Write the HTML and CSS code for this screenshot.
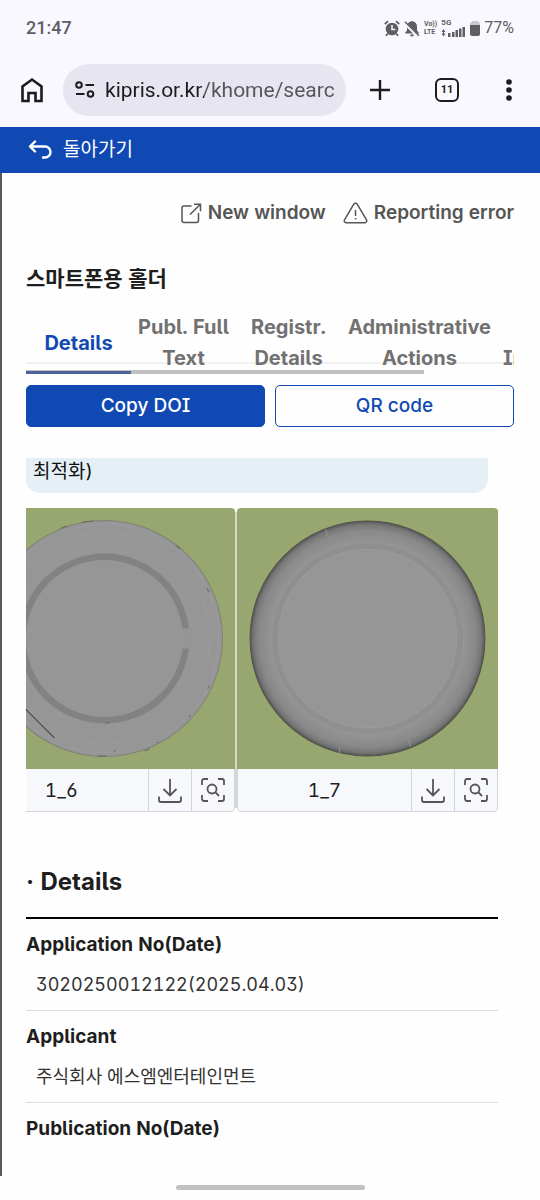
FILE: index.html
```html
<!DOCTYPE html>
<html lang="ko">
<head>
  <meta charset="UTF-8">
  <meta name="viewport" content="width=device-width, initial-scale=1.0">
  <title>스마트폰용 홀더</title>
  <link rel="stylesheet" href="styles.css">
</head>
<body>
  <header class="browser">
    <div class="status-bar">
      <span class="clock">21:47</span>
      <div class="status-icons">
        <svg width="16" height="17" viewBox="0 0 16 17">
          <circle cx="8" cy="9" r="6.3" fill="#5f5e63"/>
          <path d="M.8 4.2L4 1.2M15.2 4.2L12 1.2M3.8 13.6L2 15.8M12.2 13.6L14 15.8" stroke="#5f5e63" stroke-width="1.8"/>
          <path d="M8 5v4.4h3.4" fill="none" stroke="#f9f8fe" stroke-width="1.5"/>
        </svg>
        <svg width="16" height="17" viewBox="0 0 16 17">
          <path d="M8 1c-3.4.6-5 2.6-5 5.500v4L1.200 12.500v1h13.600v-1L13 10.500v-4C13 3.600 11.400 1.600 8 1z" fill="#5f5e63"/>
          <path d="M6 14.600h4a2 2 0 0 1-4 0z" fill="#5f5e63"/>
          <path d="M.2 2.600L14 16.400" stroke="#f9f8fe" stroke-width="3"/>
          <path d="M1 1.800L15 15.800" stroke="#5f5e63" stroke-width="1.500"/>
        </svg>
        <span class="volte"><span>Vo))</span><span>LTE</span></span>
        <span class="signal">
          <span>5G</span>
          <svg width="25" height="10" viewBox="0 0 25 10" fill="#5f5e63">
            <path d="M2.500 2L4.500 5h-4zM2.500 9.500L.5 6.500h4zM2 4h1v4H2z"/>
            <rect x="7" y="6" width="2.500" height="4"/><rect x="11" y="5" width="2.500" height="5"/>
            <rect x="14.500" y="3" width="2.500" height="7"/><rect x="18" y="1.500" width="2.500" height="8.500"/>
            <rect x="21.500" y="0" width="2.500" height="10"/>
          </svg>
        </span>
        <svg width="10" height="17" viewBox="0 0 10 17">
          <path d="M0 4a2 2 0 0 1 2-2V1h6v1a2 2 0 0 1 2 2v2H0z" fill="#c9c8ce"/>
          <path d="M0 5h10v9a2 2 0 0 1-2 2H2a2 2 0 0 1-2-2z" fill="#5f5e63"/>
        </svg>
        <span class="battery">77%</span>
      </div>
    </div>
    <div class="toolbar">
      <button type="button" class="icon-btn" aria-label="Home">
        <svg width="24" height="26" viewBox="0 0 24 26">
          <path d="M2.500 24V9.500L12 2.500l9.500 7V24h-6v-8h-7v8z" fill="none" stroke="#1c1b20" stroke-width="2.600"/>
        </svg>
      </button>
      <div class="address">
        <svg width="20" height="18" viewBox="0 0 20 18" fill="none" stroke="#1c1b20" stroke-width="2">
          <circle cx="4" cy="4" r="2.800"/><path d="M10.500 4H19M1 13h8.500"/><circle cx="15.500" cy="13" r="2.800"/>
        </svg>
        <input type="text" class="url" aria-label="Address" value="kipris.or.kr/khome/searc">
      </div>
      <div class="toolbar-actions">
        <button type="button" class="icon-btn" aria-label="New tab">
          <svg width="22" height="22" viewBox="0 0 22 22"><path d="M11 1v20M1 11h20" stroke="#1c1b20" stroke-width="2.400"/></svg>
        </button>
        <button type="button" class="tab-count">11</button>
        <button type="button" class="icon-btn menu-btn" aria-label="Menu">
          <svg width="6" height="22" viewBox="0 0 6 22" fill="#1c1b20"><circle cx="3" cy="3" r="2.800"/><circle cx="3" cy="11" r="2.800"/><circle cx="3" cy="19" r="2.800"/></svg>
        </button>
      </div>
    </div>
  </header>

  <a class="back-bar" href="#">
    <svg width="24" height="20" viewBox="0 0 24 20" fill="none" stroke="#fff" stroke-width="2.400" stroke-linecap="round" stroke-linejoin="round">
      <path d="M7 1.500L2 6.500 7 11.500M2.500 6.500h14.500a5 5 0 0 1 0 11H15"/>
    </svg>
    돌아가기
  </a>

  <main class="page">
    <div class="page-links">
      <a href="#">
        <svg width="21" height="21" viewBox="0 0 21 21" fill="none" stroke="#555" stroke-width="1.500">
          <path d="M10.500 3H3a2 2 0 0 0-2 2v12.500a2 2 0 0 0 2 2h12.500a2 2 0 0 0 2-2V10M13 1.200h6.500v7M19.200 1.500L9 11.500"/>
        </svg>
        New window
      </a>
      <a href="#">
        <svg width="25" height="22" viewBox="0 0 25 22" fill="none" stroke="#555" stroke-width="1.500" stroke-linejoin="round">
          <path d="M10.800 2.200a2 2 0 0 1 3.400 0l9.300 15.600a1.900 1.900 0 0 1-1.600 2.900H3.100a1.900 1.900 0 0 1-1.600-2.900z"/>
          <path d="M12.500 8v6M12.500 16v1.500"/>
        </svg>
        Reporting error
      </a>
    </div>

    <h1 class="title">스마트폰용 홀더</h1>

    <nav class="tabs">
      <a href="#" class="tab active">Details</a>
      <a href="#" class="tab">Publ. Full<br>Text</a>
      <a href="#" class="tab">Registr.<br>Details</a>
      <a href="#" class="tab">Administrative<br>Actions</a>
      <a href="#" class="tab more">In</a>
    </nav>
    <div class="tab-scroll"><div class="tab-marker"></div></div>

    <div class="buttons">
      <button type="button" class="btn primary">Copy DOI</button>
      <button type="button" class="btn">QR code</button>
    </div>

    <div class="content">
      <p class="notice">최적화)</p>

      <div class="gallery">
        <figure class="shot">
          <svg class="drawing" viewBox="0 0 260 260">
            <rect width="260" height="260" fill="#98a66f"/>
            <circle cx="130" cy="130" r="117.500" fill="#969696" stroke="#7f8377" stroke-width="1"/>
            <g fill="none" stroke="#9b9b9b">
              <circle cx="130" cy="130" r="114" stroke="#9b9b9f"/>
              <circle cx="130" cy="130" r="105"/>
              <circle cx="130" cy="130" r="88" stroke="#999"/>
            </g>
            <circle cx="130" cy="130" r="81.500" fill="none" stroke="#828282" stroke-width="6.500"/>
            <path d="M200 120h15v20h-15z" fill="#969696"/>
            <path d="M177 122h28M177 139h28M177 122v17M53 122h30v17H53" fill="none" stroke="#999"/>
            <path d="M51 200l29 29" stroke="#444" stroke-width="1"/>
            <path d="M108 14l11-1M87 20l6-2M201 37l4 4M232 80l2 4M170 242l5-2M123 247h9M233 180l1-3M214 208l2-2M131 214h4M182 234l2-1M139 242h2" stroke="#676a61" stroke-width="1"/>
          </svg>
          <figcaption>
            <span class="shot-name">1_6</span>
            <button type="button" aria-label="Download">
              <svg width="24" height="25" viewBox="0 0 24 25" fill="none" stroke="#555" stroke-width="1.800">
                <path d="M12 1v16M5.500 11l6.500 6.500 6.500-6.500M1 18.500V22a2 2 0 0 0 2 2h18a2 2 0 0 0 2-2v-3.500"/>
              </svg>
            </button>
            <button type="button" aria-label="Zoom">
              <svg width="24" height="24" viewBox="0 0 24 24" fill="none" stroke="#555" stroke-width="1.800">
                <path d="M1 7V3a2 2 0 0 1 2-2h4M17 1h4a2 2 0 0 1 2 2v4M23 17v4a2 2 0 0 1-2 2h-4M7 23H3a2 2 0 0 1-2-2v-4"/>
                <circle cx="11" cy="11" r="4.500"/><path d="M14.200 14.200L18 18"/>
              </svg>
            </button>
          </figcaption>
        </figure>
        <figure class="shot">
          <svg class="drawing" viewBox="0 0 260 260">
            <defs>
              <radialGradient id="rim">
                <stop offset="0.820" stop-color="#949494"/>
                <stop offset="0.920" stop-color="#898989"/>
                <stop offset="0.970" stop-color="#777"/>
                <stop offset="1" stop-color="#555"/>
              </radialGradient>
            </defs>
            <rect width="260" height="260" fill="#98a66f"/>
            <circle cx="130" cy="130" r="117" fill="url(#rim)" stroke="#50544a" stroke-width="1"/>
            <circle cx="130" cy="130" r="92" fill="none" stroke="#8f8f8f" stroke-width="6"/>
            <circle cx="130" cy="130" r="95.500" fill="none" stroke="#959595"/>
            <circle cx="130" cy="130" r="89" fill="#969696" stroke="#9b9b9b"/>
            <path d="M88 21l6 16M173 238l-3-9M102 244v-6" stroke="#909090"/>
          </svg>
          <figcaption>
            <span class="shot-name">1_7</span>
            <button type="button" aria-label="Download">
              <svg width="24" height="25" viewBox="0 0 24 25" fill="none" stroke="#555" stroke-width="1.800">
                <path d="M12 1v16M5.500 11l6.500 6.500 6.500-6.500M1 18.500V22a2 2 0 0 0 2 2h18a2 2 0 0 0 2-2v-3.500"/>
              </svg>
            </button>
            <button type="button" aria-label="Zoom">
              <svg width="24" height="24" viewBox="0 0 24 24" fill="none" stroke="#555" stroke-width="1.800">
                <path d="M1 7V3a2 2 0 0 1 2-2h4M17 1h4a2 2 0 0 1 2 2v4M23 17v4a2 2 0 0 1-2 2h-4M7 23H3a2 2 0 0 1-2-2v-4"/>
                <circle cx="11" cy="11" r="4.500"/><path d="M14.200 14.200L18 18"/>
              </svg>
            </button>
          </figcaption>
        </figure>
      </div>

      <h2 class="section-title">· Details</h2>
      <dl class="info">
        <div class="info-row">
          <dt>Application No(Date)</dt>
          <dd>3020250012122(2025.04.03)</dd>
        </div>
        <div class="info-row">
          <dt>Applicant</dt>
          <dd>주식회사 에스엠엔터테인먼트</dd>
        </div>
        <div class="info-row">
          <dt>Publication No(Date)</dt>
        </div>
      </dl>
    </div>
  </main>

  <footer class="gesture-bar"><div class="handle"></div></footer>
</body>
</html>
```
FILE: styles.css
```css
* { box-sizing: border-box; }
body { margin: 0; min-height: 100vh; display: flex; flex-direction: column; background: #fefefe; color: #1e1e1e; font-family: Inter, "Noto Sans CJK KR", sans-serif; font-size: 19px; line-height: 28px; font-feature-settings: "cv05", "cv08", "cv03", "cv09", "tnum"; }
h1, h2, p, dl, dd, figure { margin: 0; }
a { color: inherit; text-decoration: none; }
button { padding: 0; border: none; background: none; font: inherit; font-feature-settings: inherit; color: inherit; cursor: pointer; }
svg { display: block; flex: none; }

/* browser */
.browser { background: #f9f8fe; font-family: Roboto, sans-serif; font-feature-settings: normal; }
.status-bar { display: flex; justify-content: space-between; align-items: center; height: 56px; padding: 0 26px; color: #5f5e63; }
.clock { font-size: 18px; font-weight: 500; }
.status-icons { display: flex; align-items: center; gap: 4px; }
.volte, .signal { display: flex; flex-direction: column; font-size: 8px; line-height: 8px; font-weight: 700; }
.volte { font-size: 7px; }
.battery { font-size: 16px; }
.toolbar { display: flex; align-items: center; height: 71px; padding: 0 25px 4px 20px; }
.icon-btn { display: flex; align-items: center; justify-content: center; }
.menu-btn { width: 12px; }
.address { flex: 1; display: flex; align-items: center; gap: 10px; height: 52px; margin-left: 19px; padding: 0 12px; border-radius: 26px; background: #e7e5ef; }
.url { flex: 1; min-width: 0; width: 100%; padding: 0; border: none; outline: none; font: 21px/28px Roboto, sans-serif; color: transparent; background: linear-gradient(90deg, #1c1b20 99px, #55545b 99px); -webkit-background-clip: text; background-clip: text; }
.toolbar-actions { display: flex; align-items: center; justify-content: space-between; width: 146px; margin-left: 23px; }
.tab-count { width: 24px; height: 24px; border: 2px solid #1c1b20; border-radius: 6px; font-size: 11px; font-weight: 700; line-height: 20px; }

.back-bar { display: flex; align-items: center; gap: 11px; height: 46px; padding: 0 28px; background: #1049b4; color: #fff; }

/* page */
.page { flex: 1; padding: 26px 26px 0 24px; border-left: 2px solid #59595c; }
.page-links { display: flex; justify-content: flex-end; gap: 17px; color: #555; font-weight: 600; }
.page-links a { display: flex; align-items: center; gap: 6px; }
.title { margin-top: 37px; font-size: 21px; font-weight: 700; line-height: 30px; }
.tabs { display: flex; overflow: hidden; margin-top: 18px; background: linear-gradient(#f1f1f1, #f1f1f1) 0 50px / 100% 2px no-repeat; }
.tab { display: flex; flex: none; align-items: center; justify-content: center; min-width: 105px; padding: 0 7px; color: #717171; font-size: 20px; font-weight: 700; line-height: 31px; text-align: center; }
.tab.active { color: #1049b4; }
.tab.more { align-items: flex-end; justify-content: flex-start; min-width: 0; padding-left: 5px; }
.tab-scroll { width: 81.5%; height: 4px; margin-top: -4px; background: #bfbfbf; }
.tab-marker { width: 105px; height: 4px; border-bottom: 3px solid #4c639c; }
.buttons { display: flex; gap: 10px; margin-top: 11px; }
.btn { flex: 1; height: 42px; border: 1px solid #1049b4; border-radius: 5px; background: #fefefe; color: #1049b4; font-weight: 500; }
.btn.primary { background: #1049b4; color: #fff; }

.content { margin-top: 31px; padding-right: 16px; }
.notice { height: 35px; margin-right: 10px; padding: 0 7px; border-radius: 0 0 14px 14px; background: #e5eff6; color: #111; }
.gallery { display: flex; justify-content: flex-end; gap: 2px; overflow: hidden; margin-top: 15px; background: linear-gradient(#d5d9cb, #d5d9cb) 208px 4px / 4px 296px no-repeat; }
.shot { flex: none; width: 261px; border-radius: 4px; overflow: hidden; background: #f7f8fc; }
.drawing { width: 100%; height: 261px; }
.shot figcaption { display: flex; height: 43px; border: 1px solid #d4d5da; border-top: none; border-radius: 0 0 4px 4px; }
.shot-name { flex: 1; line-height: 43px; text-align: center; }
.shot button { display: flex; align-items: center; justify-content: center; width: 43px; border-left: 1px solid #d4d5da; }

.section-title { margin-top: 54px; font-size: 24px; font-weight: 700; line-height: 32px; }
.info { margin-top: 19px; border-top: 2px solid #000; }
.info-row { display: flex; flex-direction: column; gap: 12px; padding: 12px 0 11px; border-bottom: 1px solid #dedede; }
.info-row:last-child { border-bottom: none; }
.info dt { font-weight: 700; }
.info dd { padding-left: 10px; color: #333; font-size: 18px; }

.gesture-bar { display: flex; justify-content: center; height: 24px; padding-top: 9px; }
.handle { width: 35%; height: 5px; border-radius: 3px; background: #c1c1c1; }
```
